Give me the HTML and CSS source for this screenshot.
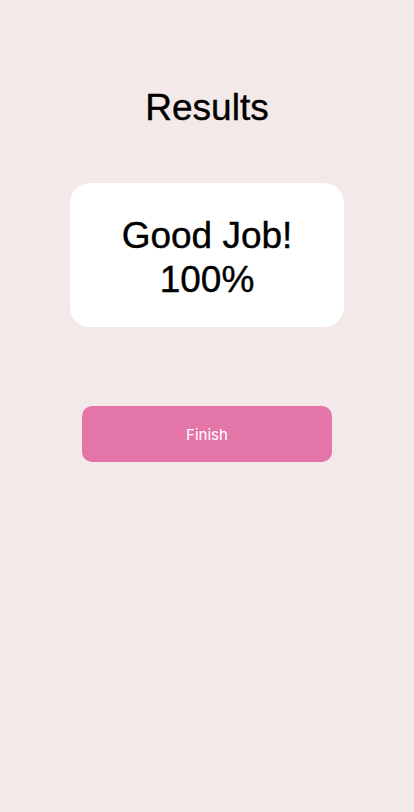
FILE: index.html
```
<!DOCTYPE html>
<html>
<head>
<meta charset="utf-8">
<link rel="stylesheet" href="styles.css">
</head>
<body>
<main class="screen">
  <h1 class="title">Results</h1>
  <section class="card">
    <p class="score">Good Job!<br>100%</p>
  </section>
  <button class="finish">Finish</button>
</main>
</body>
</html>
```
FILE: styles.css
```
html, body {
  margin: 0;
  padding: 0;
  background: #f3e9e8;
}
.screen {
  width: 414px;
  height: 812px;
  display: flex;
  flex-direction: column;
  align-items: center;
  font-family: "Liberation Sans", Arial, sans-serif;
  color: #000;
}
.title {
  margin: 88px 0 0;
  font-size: 37px;
  font-weight: 400;
  line-height: 40px;
  -webkit-text-stroke: 0.4px #000;
}
.card {
  margin-top: 55px;
  width: 274px;
  height: 144px;
  background: #fff;
  border-radius: 20px;
  display: flex;
  align-items: center;
  justify-content: center;
}
.score {
  margin: 6px 0 0;
  font-size: 37px;
  line-height: 44px;
  text-align: center;
  -webkit-text-stroke: 0.4px #000;
}
.finish {
  margin-top: 79px;
  width: 250px;
  height: 56px;
  border: none;
  border-radius: 10px;
  background: #e475a8;
  color: #fff;
  font-family: Inter, "Liberation Sans", sans-serif;
  font-size: 15px;
}
```
